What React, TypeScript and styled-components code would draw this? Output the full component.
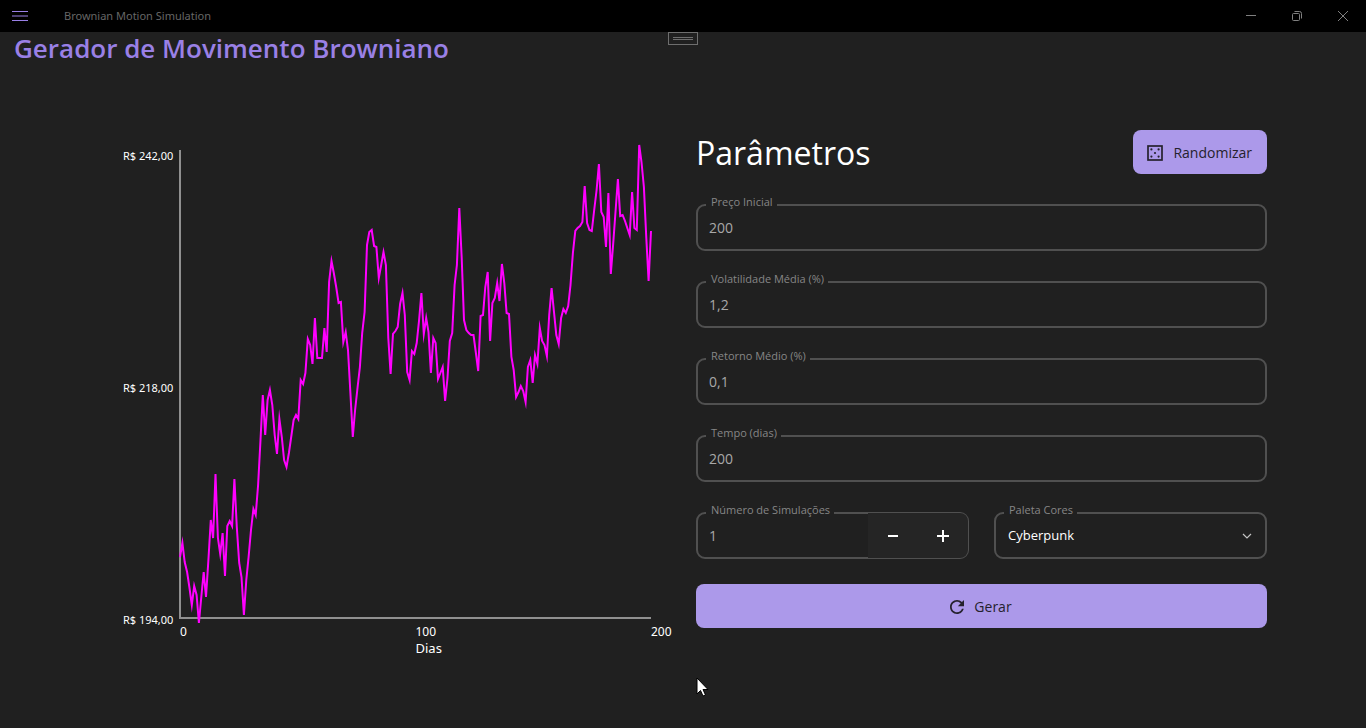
import React, { useState } from "react";
import styled, { createGlobalStyle } from "styled-components";

const GlobalStyle = createGlobalStyle`
  * { box-sizing: border-box; }
  body {
    margin: 0;
    background: #202020;
    color: #ffffff;
    font-family: "Open Sans", "Noto Sans", sans-serif;
    font-size: 14px;
  }
  button, input, select { font: inherit; }
`;

const Page = styled.div`
  position: relative;
  min-height: 100vh;
  background: #202020;
`;

const TitleBar = styled.header`
  display: flex;
  align-items: center;
  height: 32px;
  background: #000000;
`;

const BarButton = styled.button<{ $width: number }>`
  display: flex;
  align-items: center;
  justify-content: center;
  width: ${(p) => p.$width}px;
  height: 32px;
  padding: 0;
  border: 0;
  background: transparent;
`;

const WindowTitle = styled.span`
  flex: 1;
  padding-left: 24px;
  color: #666666;
  font-family: "Noto Sans", sans-serif;
  font-size: 11px;
  line-height: 16px;
`;

const DebugHandle = styled.button`
  position: absolute;
  top: 32px;
  left: 50%;
  display: flex;
  width: 30px;
  height: 13px;
  margin-left: -15px;
  padding: 0;
  border: 0;
  background: transparent;
`;

const PageTitle = styled.h1`
  margin: 0;
  padding: 0 14px;
  color: #9a80e6;
  font-size: 26px;
  font-weight: 600;
  line-height: 32px;
`;

const Content = styled.main`
  display: grid;
  grid-template-columns: minmax(0, 1fr) minmax(0, 1fr);
  gap: 26px;
  align-items: start;
  padding: 66px 99px 0;
`;

const Chart = styled.figure`
  display: grid;
  grid-template-columns: auto 1fr;
  column-gap: 5px;
  margin: 0;
  padding: 18px 19px 0 24px;
  font-family: "Noto Sans", sans-serif;
  font-size: 12px;
  line-height: 16px;
`;

const PriceAxis = styled.div`
  display: flex;
  flex-direction: column;
  justify-content: space-between;
  width: 52px;
  height: 480px;
  font-size: 11px;
  white-space: nowrap;
`;

const Plot = styled.svg`
  display: block;
  width: 100%;
  height: 468px;
  margin-top: 2px;
  overflow: visible;
`;

const DayAxis = styled.div`
  display: grid;
  grid-template-columns: 1fr 1fr 0;
  margin-top: 6px;
`;

const DayAxisTitle = styled.span`
  grid-column: 2;
  font-size: 13px;
`;

const Form = styled.form`
  display: flex;
  flex-direction: column;
  gap: 25px;
`;

const Fields = styled.div`
  display: flex;
  flex-direction: column;
  gap: 30px;
`;

const FormHeader = styled.div`
  display: flex;
  align-items: center;
  justify-content: space-between;
`;

const FormTitle = styled.h2`
  margin: 0;
  padding-top: 2px;
  font-size: 32px;
  font-weight: 400;
  line-height: 42px;
`;

const ActionButton = styled.button`
  display: flex;
  align-items: center;
  justify-content: center;
  gap: 10px;
  height: 44px;
  padding: 2px 15px 0 14px;
  border: 0;
  border-radius: 8px;
  background: #ac99ea;
  color: #25222d;
  line-height: 20px;
`;

const FieldRow = styled.div`
  display: grid;
  grid-template-columns: minmax(0, 1fr) minmax(0, 1fr);
  gap: 25px;
`;

const FieldBox = styled.div`
  position: relative;
  display: flex;
  align-items: center;
  height: 47px;
  border: 2px solid #505050;
  border-radius: 9px;
`;

const FieldLabel = styled.label`
  position: absolute;
  top: -12px;
  left: 8px;
  padding: 0 4px 0 5px;
  background: #202020;
  color: #868686;
  font-size: 11px;
  line-height: 16px;
`;

const FieldInput = styled.input`
  flex: 1;
  min-width: 0;
  height: 100%;
  padding: 0 11px;
  border: 0;
  outline: 0;
  background: transparent;
  color: #a8a8a8;
`;

const FieldSelect = styled.select`
  flex: 1;
  height: 100%;
  padding: 0 40px 2px 12px;
  border: 0;
  outline: 0;
  appearance: none;
  background: transparent;
  color: #ffffff;
  font-size: 13px;
`;

const SelectArrow = styled.svg`
  position: absolute;
  right: 13px;
  pointer-events: none;
`;

const Stepper = styled.div`
  display: flex;
  align-self: stretch;
  margin: -1px -1px -1px 0;
  border-radius: 0 8px 8px 0;
  background: #252525;
`;

const StepButton = styled.button`
  display: flex;
  align-items: center;
  justify-content: center;
  width: 50px;
  padding: 0;
  border: 0;
  background: transparent;
`;

const Pointer = styled.svg`
  position: absolute;
  top: 677px;
  left: 51%;
  margin-left: -1px;
  pointer-events: none;
`;

const PLOT_WIDTH = 471;
const PLOT_HEIGHT = 468;
const PLOT_TOP = 150;

const series = [
  557, 543, 562, 572, 588, 605, 586, 595, 623, 597, 572, 597, 560, 520, 538, 474, 538, 554, 533, 576,
  526, 521, 526, 479, 527, 563, 577, 615, 580, 557, 530, 509, 515, 485, 440, 395, 435, 400, 390, 405,
  435, 454, 419, 437, 460, 467, 453, 437, 420, 415, 419, 380, 384, 373, 339, 345, 364, 318, 358, 358,
  358, 328, 352, 282, 261, 273, 287, 303, 302, 342, 332, 350, 393, 437, 410, 388, 367, 333, 312, 245,
  232, 230, 246, 247, 278, 265, 252, 265, 338, 374, 334, 331, 327, 304, 293, 315, 372, 380, 351, 354,
  343, 320, 293, 334, 318, 332, 373, 338, 343, 379, 373, 367, 401, 378, 341, 333, 285, 265, 208, 258,
  320, 330, 333, 335, 335, 353, 371, 316, 315, 287, 272, 341, 303, 298, 283, 301, 264, 283, 313, 314,
  357, 370, 397, 392, 386, 391, 402, 367, 360, 383, 355, 364, 328, 341, 345, 356, 315, 288, 312, 335,
  344, 318, 309, 313, 306, 285, 253, 231, 228, 226, 222, 186, 223, 230, 231, 210, 190, 164, 212, 217,
  247, 193, 274, 245, 212, 179, 216, 215, 221, 228, 235, 192, 228, 230, 145, 162, 187, 238, 281, 231,
];

const linePoints = series
  .map((y, day) => `${((day * PLOT_WIDTH) / (series.length - 1)).toFixed(1)},${y - PLOT_TOP}`)
  .join(" ");

function PriceChart() {
  return (
    <Chart>
      <PriceAxis>
        <span>R$ 242,00</span>
        <span>R$ 218,00</span>
        <span>R$ 194,00</span>
      </PriceAxis>
      <div>
        <Plot viewBox={`0 0 ${PLOT_WIDTH} ${PLOT_HEIGHT}`} preserveAspectRatio="none" role="img" aria-label="Preço por dia">
          <path d="M0 0V468H471" fill="none" stroke="#909090" strokeWidth="2" vectorEffect="non-scaling-stroke" />
          <polyline
            points={linePoints}
            fill="none"
            stroke="#ff00ff"
            strokeWidth="2"
            strokeMiterlimit="10"
            vectorEffect="non-scaling-stroke"
          />
        </Plot>
        <DayAxis>
          <span>0</span>
          <span>100</span>
          <span>200</span>
          <DayAxisTitle>Dias</DayAxisTitle>
        </DayAxis>
      </div>
    </Chart>
  );
}

function TextField({ id, label, initial }: { id: string; label: string; initial: string }) {
  const [value, setValue] = useState(initial);
  return (
    <FieldBox>
      <FieldLabel htmlFor={id}>{label}</FieldLabel>
      <FieldInput id={id} value={value} onChange={(e) => setValue(e.target.value)} />
    </FieldBox>
  );
}

function SimulationCountField() {
  const [count, setCount] = useState(1);
  return (
    <FieldBox>
      <FieldLabel htmlFor="simulacoes">Número de Simulações</FieldLabel>
      <FieldInput id="simulacoes" value={count} onChange={(e) => setCount(Number(e.target.value) || 1)} />
      <Stepper>
        <StepButton type="button" aria-label="Diminuir" onClick={() => setCount(Math.max(1, count - 1))}>
          <svg width="12" height="12" viewBox="0 0 12 12" stroke="#ffffff" strokeWidth="2">
            <path d="M1 6H11" />
          </svg>
        </StepButton>
        <StepButton type="button" aria-label="Aumentar" onClick={() => setCount(count + 1)}>
          <svg width="12" height="12" viewBox="0 0 12 12" stroke="#ffffff" strokeWidth="2">
            <path d="M0 6H12M6 0V12" />
          </svg>
        </StepButton>
      </Stepper>
    </FieldBox>
  );
}

function PaletteField() {
  return (
    <FieldBox>
      <FieldLabel htmlFor="paleta">Paleta Cores</FieldLabel>
      <FieldSelect id="paleta" defaultValue="Cyberpunk">
        <option>Cyberpunk</option>
      </FieldSelect>
      <SelectArrow width="10" height="6" viewBox="0 0 10 6" fill="none" stroke="#c4c4c4" strokeWidth="1.2">
        <path d="M1 1L5 5L9 1" />
      </SelectArrow>
    </FieldBox>
  );
}

export default function App() {
  return (
    <Page>
      <GlobalStyle />
      <TitleBar>
        <BarButton $width={40} type="button" aria-label="Menu">
          <svg width="16" height="12" viewBox="0 0 16 12" stroke="#9a80e6">
            <path d="M0 1.5H16M0 10.5H16" />
            <path d="M0 6H16" />
          </svg>
        </BarButton>
        <WindowTitle>Brownian Motion Simulation</WindowTitle>
        <BarButton $width={46} type="button" aria-label="Minimizar">
          <svg width="10" height="10" viewBox="0 0 10 10" stroke="#808080">
            <path d="M0 4.5H10" />
          </svg>
        </BarButton>
        <BarButton $width={46} type="button" aria-label="Restaurar">
          <svg width="10" height="10" viewBox="0 0 10 10" fill="none" stroke="#808080">
            <rect x="0.5" y="2.5" width="7" height="7" rx="1" />
            <path d="M2.5 0.5H7.5Q9.5 0.5 9.5 2.5V7.5" />
          </svg>
        </BarButton>
        <BarButton $width={46} type="button" aria-label="Fechar">
          <svg width="10" height="10" viewBox="0 0 10 10" stroke="#808080">
            <path d="M0 0L10 10M10 0L0 10" />
          </svg>
        </BarButton>
      </TitleBar>
      <DebugHandle type="button" aria-label="Barra de ferramentas">
        <svg width="30" height="13" viewBox="0 0 30 13" fill="none" stroke="#6e6e6e">
          <rect x="0.5" y="0.5" width="29" height="12" />
          <path d="M5 5.5H25M5 7.5H25" />
        </svg>
      </DebugHandle>
      <PageTitle>Gerador de Movimento Browniano</PageTitle>
      <Content>
        <PriceChart />
        <Form onSubmit={(e) => e.preventDefault()}>
          <Fields>
            <FormHeader>
              <FormTitle>Parâmetros</FormTitle>
              <ActionButton type="button">
                <svg width="16" height="16" viewBox="0 0 16 16" fill="#25222d">
                  <rect x="1" y="1" width="14" height="14" fill="none" stroke="#25222d" strokeWidth="1.7" />
                  <circle cx="4.4" cy="4.4" r="1.1" />
                  <circle cx="11.6" cy="4.4" r="1.1" />
                  <circle cx="8" cy="8" r="1.1" />
                  <circle cx="4.4" cy="11.6" r="1.1" />
                  <circle cx="11.6" cy="11.6" r="1.1" />
                </svg>
                Randomizar
              </ActionButton>
            </FormHeader>
            <TextField id="preco" label="Preço Inicial" initial="200" />
            <TextField id="volatilidade" label="Volatilidade Média (%)" initial="1,2" />
            <TextField id="retorno" label="Retorno Médio (%)" initial="0,1" />
            <TextField id="tempo" label="Tempo (dias)" initial="200" />
            <FieldRow>
              <SimulationCountField />
              <PaletteField />
            </FieldRow>
          </Fields>
          <ActionButton type="submit">
            <svg width="14" height="14" viewBox="4 4 16 16" fill="#25222d">
              <path d="M17.65 6.35C16.2 4.9 14.21 4 12 4c-4.42 0-7.99 3.58-7.99 8s3.57 8 7.99 8c3.73 0 6.84-2.55 7.73-6h-2.08c-.82 2.33-3.04 4-5.65 4-3.31 0-6-2.69-6-6s2.69-6 6-6c1.66 0 3.14.69 4.22 1.78L13 11h7V4l-2.35 2.35z" />
            </svg>
            Gerar
          </ActionButton>
        </Form>
      </Content>
      <Pointer width="13" height="20" viewBox="0 0 13 20">
        <path d="M1 1V17L4.500 13.500L7 19L9.500 18L7 12.500H12Z" fill="#ffffff" stroke="#000000" />
      </Pointer>
    </Page>
  );
}
